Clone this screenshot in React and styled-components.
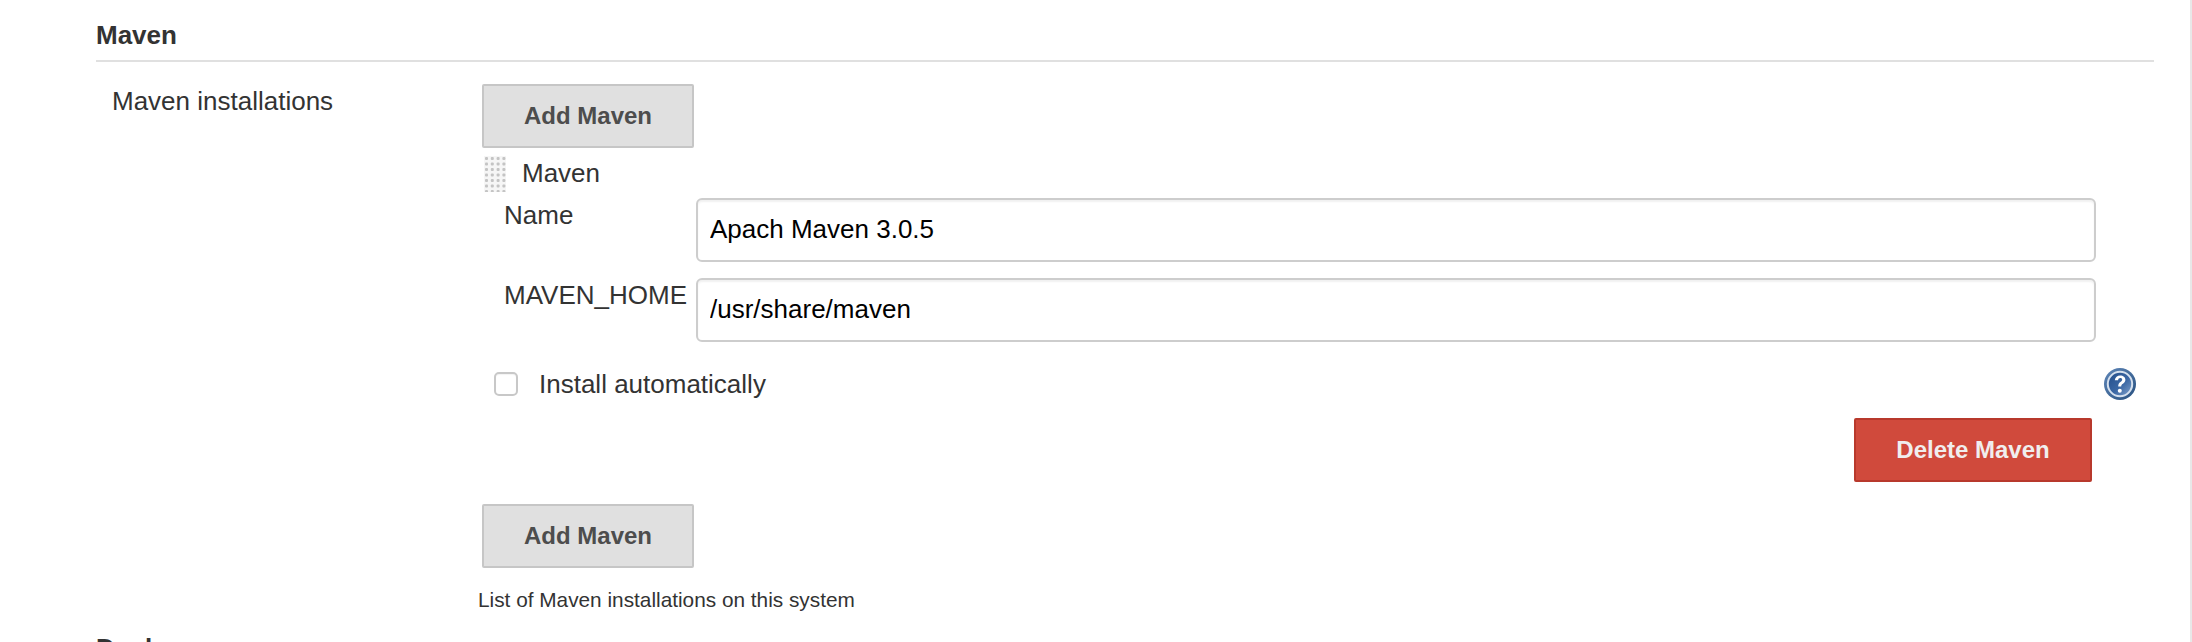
import React from "react";
import styled, { createGlobalStyle } from "styled-components";

const GlobalStyle = createGlobalStyle`
  html, body {
    margin: 0;
    padding: 0;
    height: 642px;
    overflow: hidden;
    background: #fff;
  }
  body {
    font-family: "Liberation Sans", Arial, sans-serif;
    color: #333;
  }
`;

const Page = styled.main`
  width: 2192px;
  height: 642px;
  overflow: hidden;
  box-sizing: border-box;
  border-right: 2px solid #e8e8e8;
  padding: 16px 36px 0 96px;
`;

const SectionTitle = styled.h2`
  margin: 0;
  height: 44px;
  border-bottom: 2px solid #e0e0e0;
  font-size: 26px;
  line-height: 38px;
  font-weight: 700;
  color: #333;
`;

const Row = styled.section`
  display: flex;
  margin-top: 22px;
`;

const RowLabel = styled.div`
  width: 386px;
  flex: none;
  padding: 2px 0 0 16px;
  box-sizing: border-box;
  font-size: 26px;
  line-height: 30px;
`;

const Column = styled.div`
  flex: 1;
  min-width: 0;
`;

const Button = styled.button`
  display: block;
  box-sizing: border-box;
  height: 64px;
  padding: 0;
  font-family: inherit;
  font-size: 24px;
  font-weight: 700;
  border-radius: 2px;
  border: 2px solid ${(p) => (p.$danger ? "#b8392c" : "#c6c6c6")};
  background: ${(p) => (p.$danger ? "#d04a3c" : "#e0e0e0")};
  color: ${(p) => (p.$danger ? "#f0eeee" : "#4d4d4d")};
  width: ${(p) => (p.$danger ? "238px" : "212px")};
`;

const RepeatedItem = styled.div`
  margin-top: 8px;
`;

const ItemHeader = styled.div`
  display: flex;
  align-items: center;
  height: 36px;
  padding-left: 2px;
  font-size: 26px;
`;

const ItemName = styled.span`
  margin: 0 0 2px 16px;
`;

const Field = styled.div`
  display: flex;
  margin-top: ${(p) => p.$gap}px;
  padding-left: 22px;
`;

const FieldLabel = styled.label`
  width: 192px;
  flex: none;
  padding-top: 2px;
  font-size: 26px;
  line-height: 30px;
  white-space: nowrap;
`;

const TextInput = styled.input`
  box-sizing: border-box;
  flex: none;
  width: 1400px;
  height: 64px;
  padding: 0 12px 2px;
  border: 2px solid #cdcdcd;
  border-radius: 6px;
  box-shadow: inset 0 2px 2px rgba(0, 0, 0, 0.06);
  font-family: inherit;
  font-size: 26px;
  color: #000;
  outline: none;
`;

const CheckRow = styled.div`
  display: flex;
  align-items: center;
  justify-content: space-between;
  box-sizing: border-box;
  width: 1654px;
  height: 32px;
  margin-top: 26px;
  padding-left: 12px;
`;

const CheckLabel = styled.label`
  display: flex;
  align-items: center;
  font-size: 26px;
`;

const CheckBox = styled.span`
  display: block;
  box-sizing: border-box;
  width: 24px;
  height: 24px;
  margin-right: 21px;
  border: 2px solid #c8c8c8;
  border-radius: 5px;
  background: #fff;
  box-shadow: inset 0 1px 1px rgba(0, 0, 0, 0.05);
`;

const DeleteRow = styled.div`
  display: flex;
  justify-content: flex-end;
  width: 1610px;
  margin-top: 18px;
`;

const AddAgain = styled.div`
  margin-top: 22px;
`;

const Description = styled.p`
  margin: 19px 0 0 -4px;
  font-size: 20.8px;
  line-height: 26px;
`;

const NextTitle = styled(SectionTitle)`
  margin-top: 16px;
  border-bottom: 0;
`;

const GripIcon = () => {
  const dots = [];
  for (let r = 0; r < 7; r++) {
    for (let c = 0; c < 4; c++) {
      dots.push(
        <rect key={`${r}-${c}`} x={1 + c * 5.8} y={1 + r * 5.5} width="3" height="3" rx="1" fill="#c4c4c4" />
      );
    }
  }
  return (
    <svg width="22" height="36" viewBox="0 0 22 36" aria-hidden="true">
      <rect width="22" height="36" fill="#f6f6f6" />
      {dots}
    </svg>
  );
};

const HelpIcon = () => (
  <svg width="32" height="32" viewBox="0 0 32 32" aria-label="help">
    <defs>
      <linearGradient id="helpFill" x1="0" y1="0" x2="1" y2="1">
        <stop offset="0" stopColor="#234c88" />
        <stop offset="0.55" stopColor="#3a67a4" />
        <stop offset="1" stopColor="#86a5cd" />
      </linearGradient>
      <linearGradient id="helpEdge" x1="0" y1="0" x2="1" y2="1">
        <stop offset="0" stopColor="#5f86b8" />
        <stop offset="1" stopColor="#27507f" />
      </linearGradient>
    </defs>
    <circle cx="16" cy="16" r="16" fill="url(#helpEdge)" />
    <circle cx="16" cy="16" r="12.2" fill="url(#helpFill)" stroke="#d5e0ee" strokeWidth="2" />
    <path
      d="M10.8 12.2c.3-3 2.6-4.8 5.4-4.8 3 0 5.2 1.8 5.2 4.3 0 1.9-1 3-2.5 4-1.2.8-1.7 1.4-1.7 2.9h-3c0-2.4.7-3.6 2.2-4.6 1.2-.8 1.8-1.4 1.8-2.2 0-1-.8-1.7-1.9-1.7-1.2 0-2.1.8-2.2 2.2z"
      fill="#fff"
    />
    <circle cx="15.8" cy="22.8" r="2" fill="#fff" />
  </svg>
);

export default function App() {
  return (
    <>
      <GlobalStyle />
      <Page>
        <SectionTitle>Maven</SectionTitle>
        <Row>
          <RowLabel>Maven installations</RowLabel>
          <Column>
            <Button>Add Maven</Button>
            <RepeatedItem>
              <ItemHeader>
                <GripIcon />
                <ItemName>Maven</ItemName>
              </ItemHeader>
              <Field $gap={6}>
                <FieldLabel>Name</FieldLabel>
                <TextInput readOnly value="Apach Maven 3.0.5" />
              </Field>
              <Field $gap={16}>
                <FieldLabel>MAVEN_HOME</FieldLabel>
                <TextInput readOnly value="/usr/share/maven" />
              </Field>
              <CheckRow>
                <CheckLabel>
                  <CheckBox />
                  Install automatically
                </CheckLabel>
                <HelpIcon />
              </CheckRow>
              <DeleteRow>
                <Button $danger>Delete Maven</Button>
              </DeleteRow>
            </RepeatedItem>
            <AddAgain>
              <Button>Add Maven</Button>
            </AddAgain>
            <Description>List of Maven installations on this system</Description>
          </Column>
        </Row>
        <NextTitle>Docker</NextTitle>
      </Page>
    </>
  );
}
